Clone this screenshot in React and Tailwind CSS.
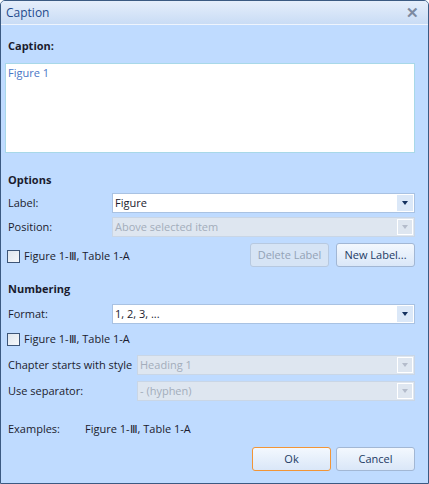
import React from 'react';

const font = { fontFamily: '"Open Sans", "Noto Sans", sans-serif' };

function Combo({ value, disabled }) {
  return (
    <div
      className={`flex-1 h-[20px] flex items-stretch border ${
        disabled ? 'border-[#c9d6e6] bg-[#dee6f0]' : 'border-[#a9c2e2] bg-white'
      }`}
    >
      <div
        className={`flex-1 flex items-center pl-[2px] whitespace-nowrap ${
          disabled ? 'text-[#a3adbb]' : 'text-[#1b1b2e]'
        }`}
      >
        {value}
      </div>
      <div
        className={`w-[16px] m-[1px] flex items-center justify-center ${
          disabled ? 'border border-white bg-[#dee6f0]' : 'bg-[#dbe8f8]'
        }`}
      >
        <div
          className={`w-0 h-0 border-l-[3.5px] border-r-[3.5px] border-t-[4px] border-l-transparent border-r-transparent ${
            disabled ? 'border-t-[#b4bccb]' : 'border-t-[#15325f]'
          }`}
        />
      </div>
    </div>
  );
}

function Btn({ children, disabled, primary }) {
  return (
    <button
      className={`w-[79px] h-[24px] rounded-[3px] border whitespace-nowrap ${
        disabled
          ? 'border-[#b7c9e0] bg-[#d6e4f5] text-[#93a2b6]'
          : primary
          ? 'border-[#f29536] bg-gradient-to-b from-[#f3f8fe] to-[#dae7f8] text-[#1c3a63]'
          : 'border-[#a2b7d4] bg-gradient-to-b from-[#f3f8fe] to-[#dae7f8] text-[#1c3a63]'
      }`}
    >
      {children}
    </button>
  );
}

function Check({ label }) {
  return (
    <div className="flex items-center h-[16px] pl-[2px]">
      <div className="w-[13px] h-[13px] border border-[#3d5577] bg-gradient-to-br from-[#dfe6ee] to-[#f6f8fb]" />
      <span className="ml-[4px] whitespace-nowrap text-[#1b1b2e]">{label}</span>
    </div>
  );
}

export default function App() {
  return (
    <div
      className="w-[429px] h-[484px] flex flex-col border border-[#3b5a82] rounded-tl-[5px] rounded-tr-[5px] overflow-hidden bg-[#bfdbff] text-[11px]"
      style={font}
    >
      {/* title bar */}
      <div className="h-[24px] shrink-0 flex items-center justify-between pl-[5px] pr-[9px] bg-gradient-to-b from-[#e5eefb] to-[#c9dcf5] border-b border-[#eef4fd]">
        <span className="text-[12px] text-[#1f4a8c]">Caption</span>
        <span className="text-[15px] leading-none text-[#7d8aa0] font-bold">✕</span>
      </div>

      <div className="flex-1 flex flex-col pl-[4px] pr-[13px] pt-[13px] text-[#1b1b2e] leading-[16px]">
        <div className="h-[16px] pl-[3px] font-bold">Caption:</div>
        <div className="mt-[9px] h-[90px] shrink-0 border border-[#a8d8e8] bg-white px-[2px] pt-[1px]">
          <span className="text-[#4a76c6]">Figure 1</span>
        </div>

        <div className="mt-[19px] h-[16px] pl-[3px] font-bold">Options</div>
        <div className="mt-[5px] flex items-center">
          <div className="w-[107px] pl-[3px]">Label:</div>
          <Combo value="Figure" />
        </div>
        <div className="mt-[4px] flex items-center">
          <div className="w-[107px] pl-[3px]">Position:</div>
          <Combo value="Above selected item" disabled />
        </div>
        <div className="mt-[6px] flex items-center">
          <div className="flex-1 pt-[2px]">
            <Check label="Figure 1-Ⅲ, Table 1-A" />
          </div>
          <Btn disabled>Delete Label</Btn>
          <div className="w-[7px]" />
          <Btn>New Label...</Btn>
        </div>

        <div className="mt-[14px] h-[16px] pl-[3px] font-bold">Numbering</div>
        <div className="mt-[7px] flex items-center">
          <div className="w-[107px] pl-[3px]">Format:</div>
          <Combo value="1, 2, 3, ..." />
        </div>
        <div className="mt-[7px]">
          <Check label="Figure 1-Ⅲ, Table 1-A" />
        </div>
        <div className="mt-[8px] flex items-center">
          <div className="w-[132px] pl-[3px] whitespace-nowrap">Chapter starts with style</div>
          <Combo value="Heading 1" disabled />
        </div>
        <div className="mt-[6px] flex items-center">
          <div className="w-[132px] pl-[3px]">Use separator:</div>
          <Combo value="- (hyphen)" disabled />
        </div>

        <div className="mt-[20px] h-[16px] flex">
          <div className="w-[80px] pl-[3px]">Examples:</div>
          <div>Figure 1-Ⅲ, Table 1-A</div>
        </div>

        <div className="mt-[10px] flex justify-end">
          <Btn primary>Ok</Btn>
          <div className="w-[5px]" />
          <Btn>Cancel</Btn>
        </div>
      </div>
    </div>
  );
}
